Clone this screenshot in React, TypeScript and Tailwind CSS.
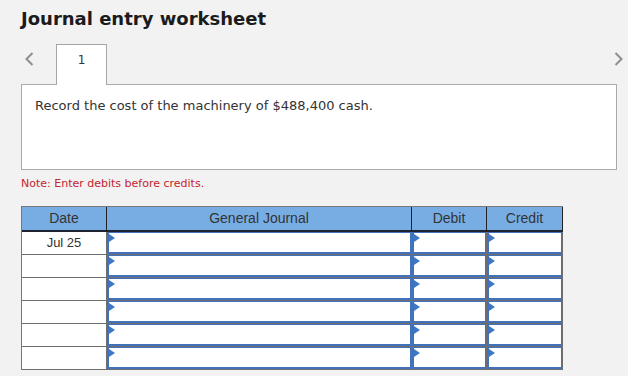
const rows = ["Jul 25", "", "", "", "", ""];

const Flag = () => (
  <svg className="absolute left-0 top-[1px]" width="6" height="8" viewBox="0 0 6 8">
    <polygon points="0,0 6,4 0,8" fill="#3b78c8" />
  </svg>
);

const InputCell = ({ width }: { width: string }) => (
  <div className={`${width} h-full border-r border-[#6f6f6f]`}>
    <div className="relative h-full border-l-2 border-r border-t border-b-2 border-[#4171b8] bg-white">
      <Flag />
    </div>
  </div>
);

const Chevron = ({ dir }: { dir: "left" | "right" }) => (
  <svg width="9" height="14" viewBox="0 0 9 14" fill="none">
    <polyline
      points={dir === "left" ? "7.5,1 1.5,7 7.5,13" : "1.5,1 7.5,7 1.5,13"}
      stroke="#8f8f8f"
      strokeWidth="2"
    />
  </svg>
);

export default function App() {
  return (
    <div className="w-[628px] h-[376px] overflow-hidden bg-[#f2f2f2] font-['DejaVu_Sans',Verdana,sans-serif] text-[#222]">
      <h1 className="pl-[21px] pt-[7px] text-[18px] font-bold leading-[23px] text-[#1b1b1b]">
        Journal entry worksheet
      </h1>

      <div className="mt-[14px] flex h-[40px] items-start">
        <div className="ml-[25px] mt-[8px]">
          <Chevron dir="left" />
        </div>
        <div className="relative z-10 ml-[22px] flex h-[41px] w-[51px] justify-center border-l border-r border-t border-[#a6a6a6] bg-white pt-[6px] text-[12px] text-[#333]">
          1
        </div>
        <div className="ml-auto mr-[5px] mt-[8px]">
          <Chevron dir="right" />
        </div>
      </div>

      <div className="ml-[21px] h-[86px] w-[596px] border border-[#aaaaaa] bg-white px-[13px] pt-[12px] text-[13px] leading-[18px] text-[#333]">
        Record the cost of the machinery of $488,400 cash.
      </div>

      <p className="ml-[21px] mt-[7px] text-[11px] leading-[14px] text-[#c3252d]">
        Note: Enter debits before credits.
      </p>

      <div className="ml-[21px] mt-[15px] w-[542px] border-l border-[#777] font-['Liberation_Sans',Arial,sans-serif] text-[13px] text-[#333]">
        <div className="flex h-[26px] border-t border-b-2 border-t-[#7a7a7a] border-b-[#1d2430] bg-[#78ade4] text-[14px]">
          <div className="flex w-[85px] items-center justify-center border-r border-[#222]">Date</div>
          <div className="flex w-[305px] items-center justify-center border-r border-[#222]">General Journal</div>
          <div className="flex w-[75px] items-center justify-center border-r border-[#222]">Debit</div>
          <div className="flex w-[76px] items-center justify-center border-r border-[#222]">Credit</div>
        </div>
        {rows.map((d, i) => (
          <div key={i} className="flex h-[23px] border-b border-[#6f6f6f]">
            <div className="flex w-[85px] items-center justify-center border-r border-[#6f6f6f] bg-white">{d}</div>
            <InputCell width="w-[305px]" />
            <InputCell width="w-[75px]" />
            <InputCell width="w-[76px]" />
          </div>
        ))}
      </div>
    </div>
  );
}
